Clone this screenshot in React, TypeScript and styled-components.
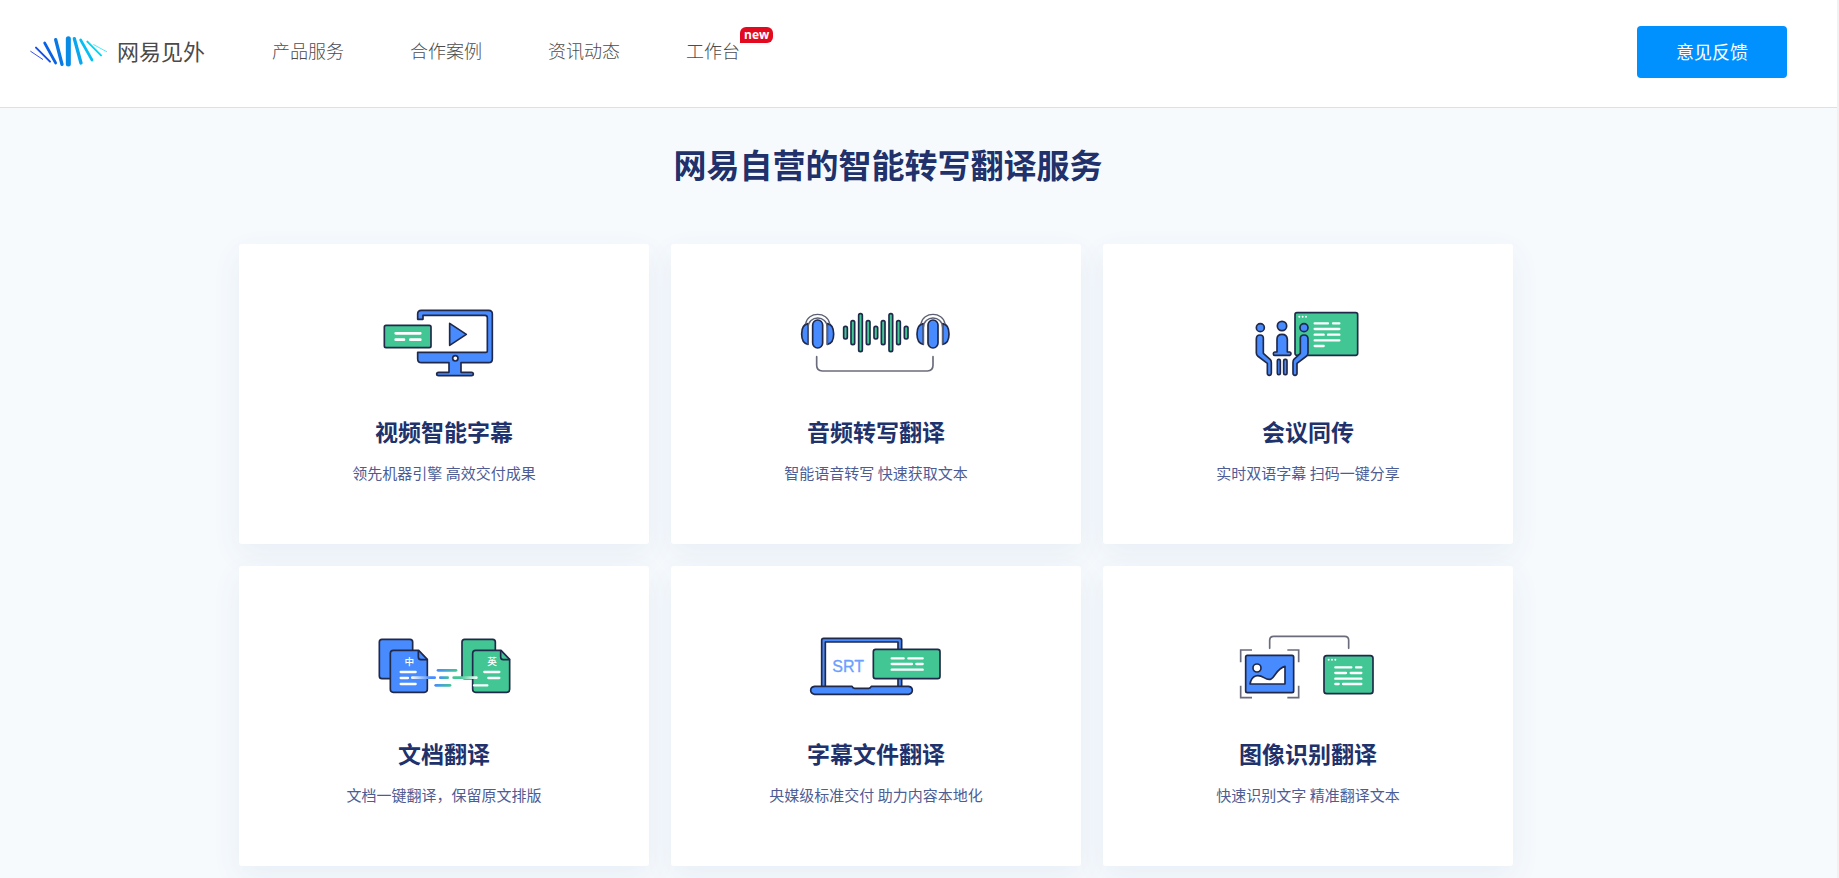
import React from "react";
import styled, { createGlobalStyle } from "styled-components";

const GlobalStyle = createGlobalStyle`
  * { box-sizing: border-box; }
  body {
    margin: 0;
    background: #f6fafd;
    font-family: "Noto Sans CJK SC", "Noto Sans", sans-serif;
  }
`;

const Page = styled.div`
  min-height: 100vh;
  background: #f6fafd;
  border-right: 2px solid #f1f1f1;
`;

const Header = styled.header`
  display: flex;
  align-items: center;
  padding: 26px 50px 29px 28px;
  background: #fff;
  border-bottom: 1px solid #e0e0e0;
`;

const Logo = styled.a`
  display: flex;
  align-items: center;
  gap: 9px;
  color: #4a4a4a;
  text-decoration: none;
`;

const LogoMark = styled.svg`
  display: block;
  width: 80px;
  height: 34px;
`;

const LogoName = styled.span`
  padding-bottom: 4px;
  font-size: 22px;
  line-height: 32px;
`;

const Nav = styled.nav`
  display: flex;
  gap: 66px;
  flex: 1;
  margin-left: 67px;
  padding-bottom: 4px;
`;

const NavLink = styled.a`
  position: relative;
  color: #4c4c4c;
  font-size: 18px;
  font-weight: 300;
  line-height: 26px;
  text-decoration: none;
  white-space: nowrap;
`;

const Badge = styled.span`
  position: absolute;
  left: 100%;
  bottom: 20px;
  padding: 0 4px;
  border-radius: 6px 6px 6px 0;
  background: #e3091f;
  color: #fff;
  font: bold 12px/16px "Open Sans", sans-serif;
`;

const FeedbackButton = styled.button`
  width: 150px;
  height: 52px;
  padding: 0 0 3px;
  border: 0;
  border-radius: 4px;
  background: #0091ff;
  color: #fff;
  font: 400 18px/26px "Noto Sans CJK SC", sans-serif;
  cursor: pointer;
`;

const Services = styled.main`
  padding: 34px 300px 12px 239px;
`;

const Heading = styled.h1`
  margin: 0 0 58px;
  color: #20316b;
  font-size: 33px;
  font-weight: 700;
  line-height: 44px;
  text-align: center;
`;

const Grid = styled.div`
  display: grid;
  grid-template-columns: repeat(3, minmax(0, 1fr));
  gap: 22px;
  padding-right: 24px;
`;

const Card = styled.article`
  display: flex;
  flex-direction: column;
  align-items: center;
  padding: 56px 16px 61px;
  border-radius: 3px;
  background: #fff;
  box-shadow: 0 10px 30px rgba(50, 90, 150, 0.07);
`;

const Illustration = styled.svg`
  display: block;
  width: 160px;
  height: 90px;
`;

const CardTitle = styled.h2`
  margin: 25px 0 16px;
  color: #20316b;
  font-size: 23px;
  font-weight: 700;
  line-height: 32px;
`;

const CardText = styled.p`
  margin: 0;
  color: #4d5c95;
  font-size: 15px;
  line-height: 20px;
`;

const BLUE = "#478bff";
const GREEN = "#41c694";
const INK = "#20294a";

const VideoIcon = () => (
  <Illustration viewBox="-18 0 480 270" fill="none" stroke={INK} strokeWidth="5" strokeLinejoin="round" strokeLinecap="round" aria-hidden="true">
    <path fill={BLUE} d="M143 58V42q0-11 11-11H356q11 0 11 11V177q0 11-11 11H273v29h31q6 0 6 5t-6 5H206q-6 0-6-5t6-5h31v-29H155q-12 0-12-12V157H347q5 0 5-5V53q0-7-7-7H159v12z" />
    <path fill={BLUE} d="M239 70L289 103 239 136z" />
    <circle cx="256" cy="175" r="8" fill="#fff" />
    <rect x="43" y="76" width="140" height="67" rx="5" fill={GREEN} />
    <path stroke="#fff" strokeWidth="8" d="M77 100H151M77 119H102M121 119H151" />
  </Illustration>
);

const Headphones = ({ x }: { x: number }) => (
  <g transform={`translate(${x} 0)`}>
    <path fill={BLUE} d="M-29 71q-19 3-19 31t19 31z" />
    <path fill={BLUE} d="M29 71q19 3 19 31t-19 31z" />
    <path stroke="#5b5f73" strokeWidth="4" d="M-36 71C-30 34 30 34 36 71M-29 133V84C-29 44 29 44 29 84V133" />
    <rect x="-15" y="60" width="30" height="84" rx="15" fill={BLUE} />
  </g>
);

const waveBars = [
  [168, 19], [190, 36], [213, 57], [236, 36], [259, 19],
  [281, 36], [304, 57], [327, 36], [350, 19],
];

const AudioIcon = () => (
  <Illustration viewBox="20 0 480 270" fill="none" stroke={INK} strokeWidth="5" strokeLinejoin="round" strokeLinecap="round" aria-hidden="true">
    <Headphones x={85} />
    <Headphones x={431} />
    {waveBars.map(([x, half]) => (
      <rect key={x} x={x - 5} y={98 - half} width="11" height={half * 2} rx="5" fill={GREEN} />
    ))}
    <path stroke="#6b6c7b" d="M82 170V196q0 17 17 17H414q17 0 17-17V170" />
  </Illustration>
);

const MeetingIcon = () => (
  <Illustration viewBox="-34 0 480 270" fill="none" stroke={INK} strokeWidth="5" strokeLinejoin="round" strokeLinecap="round" aria-hidden="true">
    <rect x="167" y="38" width="188" height="128" rx="6" fill={GREEN} />
    <path stroke="#fff" strokeWidth="6" d="M180 50h0M190 50h0M200 50h0" />
    <path stroke="#fff" strokeWidth="7" d="M226 70H266M281 70H300M226 87H300M226 104H253M266 104H300M226 121H300M226 138H253" />
    <g fill={BLUE}>
      <circle cx="63" cy="83" r="12" />
      <circle cx="128" cy="78" r="14" />
      <circle cx="194" cy="83" r="12" />
      <path d="M51 117q0-12 11-12t10 12v43L93 179q3 3 3 9v32q0 6-6 6t-6-6V190L55 168q-4-4-4-10z" />
      <path d="M206 117q0-12-12-12t-11 12v43L163 179q-2 3-2 9v32q0 6 6 6t6-6V190L202 168q4-4 4-10z" />
      <path d="M113 156V118q0-15 15-15t16 15v38h7q4 1 4 5t-4 5H106q-4 0-4-5t4-5z" />
      <rect x="114" y="178" width="9" height="46" rx="4" />
      <rect x="133" y="178" width="10" height="46" rx="4" />
    </g>
  </Illustration>
);

const DocumentIcon = () => (
  <Illustration viewBox="-18 -24 480 270" fill="none" stroke={INK} strokeWidth="5" strokeLinejoin="round" strokeLinecap="round" aria-hidden="true">
    <defs>
      <linearGradient id="blueGreen">
        <stop offset="0" stopColor={BLUE} />
        <stop offset="1" stopColor={GREEN} />
      </linearGradient>
      <linearGradient id="whiteBlue">
        <stop offset="0" stopColor="#fff" />
        <stop offset="0.8" stopColor={BLUE} />
      </linearGradient>
      <linearGradient id="greenWhite">
        <stop offset="0.3" stopColor={GREEN} />
        <stop offset="1" stopColor="#fff" />
      </linearGradient>
    </defs>
    <rect x="28" y="28" width="100" height="118" rx="8" fill={BLUE} />
    <path fill={BLUE} d="M70 61H146L172 88V178q0 9-9 9H70q-9 0-9-9V70q0-9 9-9z" />
    <path d="M145 63V81q0 8 8 8H171" />
    <rect x="276" y="28" width="100" height="118" rx="8" fill={GREEN} />
    <path fill={GREEN} d="M317 61H393L419 88V178q0 9-9 9H317q-9 0-9-9V70q0-9 9-9z" />
    <path d="M392 63V81q0 8 8 8H418" />
    <g fill="#fff" stroke="none" fontSize="29" fontWeight="500" textAnchor="middle">
      <text x="118" y="106">中</text>
      <text x="366" y="106">英</text>
    </g>
    <path stroke="#fff" strokeWidth="7" d="M92 126H137M92 144H114M92 162H137M343 126H388M355 144H388M312 166H352" />
    <g stroke="none">
      <rect x="200" y="117" width="62" height="8" rx="4" fill="url(#blueGreen)" />
      <rect x="123" y="139" width="75" height="8" rx="4" fill="url(#whiteBlue)" />
      <rect x="207" y="139" width="30" height="8" rx="4" fill="url(#blueGreen)" />
      <rect x="247" y="139" width="76" height="8" rx="4" fill="url(#greenWhite)" />
      <rect x="193" y="162" width="51" height="8" rx="4" fill="url(#blueGreen)" />
    </g>
  </Illustration>
);

const SubtitleIcon = () => (
  <Illustration viewBox="-10 -9 480 270" fill="none" stroke={INK} strokeWidth="5" strokeLinejoin="round" strokeLinecap="round" aria-hidden="true">
    <path fill={BLUE} d="M67 186V46q0-6 6-6H301q6 0 6 6V186H296V51H78V186z" />
    <path fill={BLUE} d="M46 184H158q2 6 8 6H208q6 0 8-6H328q11 2 11 12t-11 12H46q-12-2-12-12t12-12z" />
    <text x="99" y="140" fill="#6b9fff" stroke="#6b9fff" strokeWidth="1" fontFamily="Liberation Sans, sans-serif" fontSize="48">SRT</text>
    <rect x="222" y="73" width="200" height="88" rx="7" fill={GREEN} />
    <path stroke="#fff" strokeWidth="7" d="M277 100H313M327 100H370M277 117H338M351 117H370M277 134H370" />
  </Illustration>
);

const ImageIcon = () => (
  <Illustration viewBox="-4 -9 480 270" fill="none" stroke={INK} strokeWidth="5" strokeLinejoin="round" strokeLinecap="round" aria-hidden="true">
    <path stroke="#6b6c7b" d="M121 70V46q0-12 12-12H346q12 0 12 12V70" />
    <path stroke="#6b6c7b" strokeLinecap="butt" strokeLinejoin="miter" d="M34 112V75H68M174 75H208V112M34 182V218H68M174 218H208V182" />
    <rect x="49" y="91" width="144" height="112" rx="5" fill={BLUE} />
    <circle cx="83" cy="129" r="12" fill="#fff" />
    <path fill="#fff" d="M62 177C67 148 88 148 104 158C139 179 132 132 167 124V177z" />
    <rect x="284" y="92" width="147" height="114" rx="8" fill={GREEN} />
    <path stroke="#fff" strokeWidth="6" d="M298 104h0M308 104h0M318 104h0" />
    <path stroke="#fff" strokeWidth="7" d="M318 127H366M380 127H396M318 144H350M364 144H396M318 161H396M318 177H328M341 177H396" />
  </Illustration>
);

const rays: [string, string, number][] = [
  ["M8 25L44 49", "#4055e8", 3],
  ["M24 14L66 56", "#174fe4", 6],
  ["M50 0L83 60", "#0961e5", 8],
  ["M83-10L102 64", "#0878e4", 10],
  ["M121-13V63", "#078be5", 15],
  ["M139-13L159 60", "#08a8ef", 10],
  ["M158-9L192 51", "#05bff2", 8],
  ["M178-4L219 37", "#05d5ee", 6],
  ["M197 5L236 26", "#55eaf7", 3],
];

const services = [
  { title: "视频智能字幕", text: "领先机器引擎 高效交付成果", Icon: VideoIcon },
  { title: "音频转写翻译", text: "智能语音转写 快速获取文本", Icon: AudioIcon },
  { title: "会议同传", text: "实时双语字幕 扫码一键分享", Icon: MeetingIcon },
  { title: "文档翻译", text: "文档一键翻译，保留原文排版", Icon: DocumentIcon },
  { title: "字幕文件翻译", text: "央媒级标准交付 助力内容本地化", Icon: SubtitleIcon },
  { title: "图像识别翻译", text: "快速识别文字 精准翻译文本", Icon: ImageIcon },
];

export default function App() {
  return (
    <>
      <GlobalStyle />
      <Page>
        <Header>
          <Logo href="#">
            <LogoMark viewBox="0 -24 240 102" fill="none" strokeLinecap="round" aria-hidden="true">
              {rays.map(([d, color, width]) => (
                <path key={d} d={d} stroke={color} strokeWidth={width} />
              ))}
            </LogoMark>
            <LogoName>网易见外</LogoName>
          </Logo>
          <Nav>
            <NavLink href="#">产品服务</NavLink>
            <NavLink href="#">合作案例</NavLink>
            <NavLink href="#">资讯动态</NavLink>
            <NavLink href="#">
              工作台<Badge>new</Badge>
            </NavLink>
          </Nav>
          <FeedbackButton type="button">意见反馈</FeedbackButton>
        </Header>
        <Services>
          <Heading>网易自营的智能转写翻译服务</Heading>
          <Grid>
            {services.map(({ title, text, Icon }) => (
              <Card key={title}>
                <Icon />
                <CardTitle>{title}</CardTitle>
                <CardText>{text}</CardText>
              </Card>
            ))}
          </Grid>
        </Services>
      </Page>
    </>
  );
}
